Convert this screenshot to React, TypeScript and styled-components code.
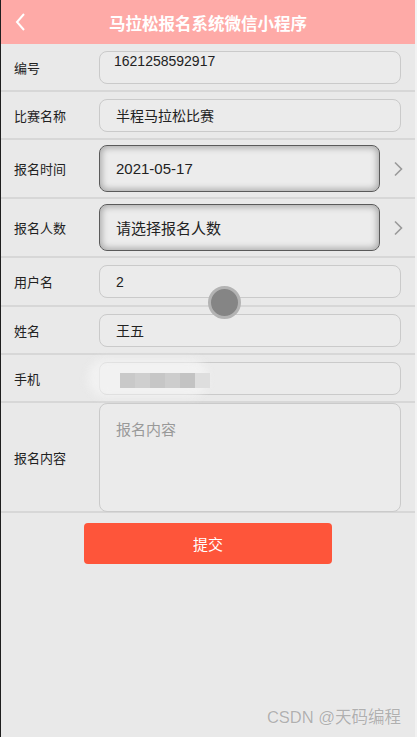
import React from "react";
import styled, { createGlobalStyle } from "styled-components";

const Global = createGlobalStyle`
  html, body { margin: 0; padding: 0; background: #e9e9e9; }
  body { font-family: "Liberation Sans", "Noto Sans CJK SC", sans-serif; }
  * { box-sizing: border-box; }
`;

const Frame = styled.div`
  position: relative;
  width: 417px;
  min-height: 737px;
  background: #e9e9e9;
  border-left: 1px solid #1e1e1e;
  border-right: 2px solid #f2f2f2;
  overflow: hidden;
`;

const Header = styled.header`
  position: relative;
  height: 44px;
  background: #feaaa7;
  display: flex;
  align-items: center;
  justify-content: center;
`;

const Back = styled.span`
  position: absolute;
  left: 13px;
  top: 11px;
  width: 14px;
  height: 22px;
  display: flex;
`;

const Title = styled.h1`
  margin: 0;
  color: #fff;
  font-family: "Noto Sans CJK SC", sans-serif;
  font-size: 16.5px;
  font-weight: 700;
  letter-spacing: 0;
  padding-top: 1px;
`;

const Row = styled.div<{ $h: number }>`
  height: ${(p) => p.$h}px;
  display: flex;
  align-items: center;
  border-bottom: 2px solid #d7d7d7;
  padding-right: 14px;
`;

const Label = styled.div`
  width: 98px;
  padding-left: 13px;
  font-family: "Noto Sans CJK SC", sans-serif;
  font-size: 13px;
  color: #222;
  flex-shrink: 0;
  align-self: center;
`;

const Field = styled.div<{ $top?: boolean }>`
  flex: 1;
  height: 33px;
  border: 1px solid #cacaca;
  border-radius: 8px;
  background: #ebebeb;
  display: flex;
  align-items: ${(p) => (p.$top ? "flex-start" : "center")};
  padding: ${(p) => (p.$top ? "1px 16px 0 14px" : "0 16px")};
  font-family: "Liberation Sans", "Noto Sans CJK SC", sans-serif;
  font-size: 14px;
  color: #222;
  position: relative;
`;

const Picker = styled.div`
  flex: 1;
  height: 47px;
  border: 1px solid #5a5a5a;
  border-radius: 8px;
  background: #ececec;
  box-shadow: inset 0 0 6px 2px rgba(0, 0, 0, 0.28);
  display: flex;
  align-items: center;
  padding: 0 16px;
  font-family: "Liberation Sans", "Noto Sans CJK SC", sans-serif;
  font-size: 15px;
  color: #222;
`;

const Chevron = styled.span`
  width: 23px;
  display: flex;
  justify-content: flex-end;
  margin-right: -2px;
`;

const Area = styled.div`
  flex: 1;
  height: 109px;
  border: 1px solid #cacaca;
  border-radius: 8px;
  background: #ebebeb;
  padding: 14px 16px;
  font-family: "Noto Sans CJK SC", sans-serif;
  font-size: 15px;
  color: #999;
`;

const Blur = styled.div`
  position: absolute;
  left: 20px;
  top: 10px;
  display: flex;
  filter: blur(0.6px);
`;

const BlurCell = styled.span<{ $c: string }>`
  width: 15px;
  height: 15px;
  background: ${(p) => p.$c};
`;

const Haze = styled.div`
  position: absolute;
  left: -12px;
  top: -4px;
  width: 120px;
  height: 38px;
  border-radius: 18px;
  background: rgba(245, 245, 245, 0.7);
  filter: blur(4px);
`;

const ButtonWrap = styled.div`
  display: flex;
  justify-content: center;
  padding-top: 10px;
`;

const Submit = styled.button`
  width: 248px;
  height: 41px;
  border: none;
  border-radius: 4px;
  background: #fe553a;
  color: #fff;
  font-family: "Noto Sans CJK SC", sans-serif;
  font-size: 15px;
`;

const Touch = styled.div`
  position: absolute;
  left: 207px;
  top: 286px;
  width: 33px;
  height: 33px;
  border-radius: 50%;
  background: #858585;
  border: 3px solid #b3b3b3;
`;

const Watermark = styled.div`
  position: absolute;
  right: 14px;
  bottom: 9px;
  font-family: "Liberation Sans", "Noto Sans CJK SC", sans-serif;
  font-size: 16.5px;
  color: #b0b0b0;
  text-shadow: 0 0 1px #fff;
`;

const Arrow = () => (
  <svg width="10" height="16" viewBox="0 0 10 16">
    <polyline points="2,1.5 8.5,8 2,14.5" fill="none" stroke="#999" strokeWidth="1.6" />
  </svg>
);

export default function App() {
  return (
    <>
      <Global />
      <Frame>
        <Header>
          <Back>
            <svg width="14" height="22" viewBox="0 0 14 22">
              <polyline points="10,3 3,11 10,19" fill="none" stroke="#fff" strokeWidth="2" />
            </svg>
          </Back>
          <Title>马拉松报名系统微信小程序</Title>
        </Header>

        <Row $h={48}>
          <Label>编号</Label>
          <Field $top>1621258592917</Field>
        </Row>
        <Row $h={48}>
          <Label>比赛名称</Label>
          <Field>半程马拉松比赛</Field>
        </Row>
        <Row $h={59}>
          <Label>报名时间</Label>
          <Picker>2021-05-17</Picker>
          <Chevron>
            <Arrow />
          </Chevron>
        </Row>
        <Row $h={59}>
          <Label>报名人数</Label>
          <Picker>请选择报名人数</Picker>
          <Chevron>
            <Arrow />
          </Chevron>
        </Row>
        <Row $h={49}>
          <Label>用户名</Label>
          <Field>2</Field>
        </Row>
        <Row $h={48}>
          <Label>姓名</Label>
          <Field>王五</Field>
        </Row>
        <Row $h={48}>
          <Label>手机</Label>
          <Field>
            <Haze />
            <Blur>
              <BlurCell $c="#c9c9c9" />
              <BlurCell $c="#cfcfcf" />
              <BlurCell $c="#c6c6c6" />
              <BlurCell $c="#cdcdcd" />
              <BlurCell $c="#c3c3c3" />
              <BlurCell $c="#dedede" />
            </Blur>
          </Field>
        </Row>
        <Row $h={110}>
          <Label>报名内容</Label>
          <Area>报名内容</Area>
        </Row>

        <ButtonWrap>
          <Submit>提交</Submit>
        </ButtonWrap>

        <Touch />
        <Watermark>CSDN @天码编程</Watermark>
      </Frame>
    </>
  );
}
